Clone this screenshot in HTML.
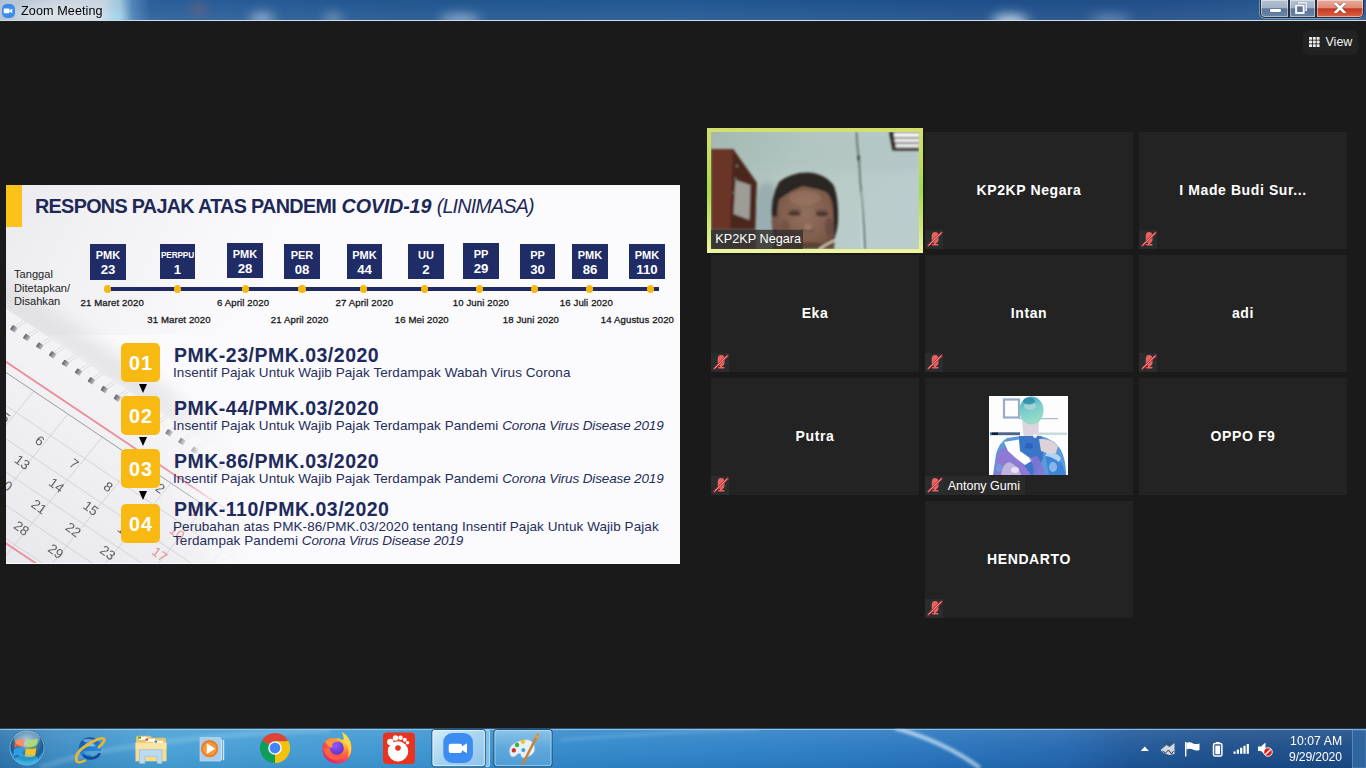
<!DOCTYPE html>
<html><head><meta charset="utf-8">
<style>
*{margin:0;padding:0;box-sizing:border-box}
html,body{width:1366px;height:768px;overflow:hidden;background:#1a1a1a;font-family:"Liberation Sans",sans-serif}
.a{position:absolute}
#titlebar{left:0;top:0;width:1366px;height:21px;background:linear-gradient(90deg,#c9d3df 0px,#d5dde6 60px,#b9cad9 170px,#5f8fbf 240px,#28609f 300px,#1f5591 420px,#22589a 700px,#1e4f8b 1000px,#2b5d97 1180px,#3a6aa0 1366px)}
#titlebar .line{left:0;top:20px;width:1366px;height:1px;background:#c8d8ea}
.title{left:21px;top:3.6px;font-size:12.6px;color:#000;letter-spacing:0.1px}
.wbtn{top:0;height:18px;border:1px solid #24303e;border-top:none;background:linear-gradient(180deg,#b5c3d3 0,#a2b3c6 45%,#5c7799 52%,#6884a6 100%);box-shadow:inset 0 0 0 1px rgba(255,255,255,0.45)}
.wbtn.cls{background:linear-gradient(180deg,#e9aa9a 0,#dc8d78 45%,#c6381f 52%,#d8644a 100%)}
.zicon{left:3px;top:4px;width:12px;height:12px;border-radius:3px;background:#3d8cf0}
.tile{position:absolute;width:208px;height:117px;background:#232323}
.tname{position:absolute;left:0;top:50px;width:208px;text-align:center;color:#fff;font-weight:bold;font-size:14px;letter-spacing:0.6px}
.mute{position:absolute;left:0;top:98px;width:18px;height:19px}
.lbl{position:absolute;font-size:12.5px;color:#fff;white-space:nowrap}
.vbtn{left:1303px;top:30px;width:55px;height:25px;border-radius:6px;background:#222}
.slide{left:6px;top:185px;width:674px;height:379px;background:#fbfbfd;overflow:hidden}
.box{position:absolute;top:59px;width:36px;height:35px;background:#1f2c66;color:#fff;font-weight:bold;text-align:center}
.box .t{font-size:11px;line-height:12px;margin-top:5px}
.box .n{font-size:13.2px;line-height:14px;margin-top:1.5px}
.box.sm .t{font-size:8.3px;letter-spacing:-0.2px;line-height:12px;margin-top:5px}
.dot{position:absolute;top:100.2px;width:7.4px;height:7.4px;border-radius:50%;background:#f7b814}
.dl{position:absolute;font-size:9.6px;letter-spacing:0.12px;color:#1a1a1a;white-space:nowrap;-webkit-text-stroke:0.3px #1a1a1a;margin-top:0.8px}
.num{position:absolute;left:115px;width:39px;height:39px;border-radius:5px;background:#f8ba12;color:#fff;font-weight:bold;font-size:19.8px;letter-spacing:0.8px;text-indent:0.8px;text-align:center;line-height:41px}
.arr{position:absolute;left:133px;width:0;height:0;border-left:4.5px solid transparent;border-right:4.5px solid transparent;border-top:9px solid #000}
.h{position:absolute;left:168px;font-size:19.5px;letter-spacing:0.5px;font-weight:bold;color:#1f2a5c;white-space:nowrap}
.s i{letter-spacing:-0.14px}
.s{position:absolute;left:167px;font-size:13.5px;letter-spacing:0.07px;color:#252d5a;white-space:nowrap}
.task{left:0;top:728px;width:1366px;height:40px;background:linear-gradient(180deg,#5fa6d6 0,#3f8fcb 2px,#3a8ac6 50%,#2f7fbf 100%)}
</style></head><body>
<div id="titlebar" class="a">
  <svg class="a" style="left:0;top:0" width="1366" height="20" viewBox="0 0 1366 20">
  <defs>
  <filter id="tb" x="-50%" y="-50%" width="200%" height="200%"><feGaussianBlur stdDeviation="6"/></filter>
  <linearGradient id="tbg" x1="0" y1="0" x2="1" y2="0">
   <stop offset="0" stop-color="#b4c2d2"/><stop offset="0.04" stop-color="#c6d0dc"/><stop offset="0.075" stop-color="#c8d4e0"/><stop offset="0.088" stop-color="#9cc4dc"/><stop offset="0.097" stop-color="#4f82b8"/><stop offset="0.11" stop-color="#2b5f9a"/><stop offset="0.3" stop-color="#22568f"/><stop offset="0.5" stop-color="#225893"/><stop offset="0.7" stop-color="#1f4f8a"/><stop offset="0.85" stop-color="#204f88"/><stop offset="1" stop-color="#2c5c93"/>
  </linearGradient>
  <linearGradient id="tbv" x1="0" y1="0" x2="0" y2="1"><stop offset="0" stop-color="#fff" stop-opacity="0"/><stop offset="1" stop-color="#fff" stop-opacity="0.07"/></linearGradient>
  </defs>
  <rect width="1366" height="20" fill="url(#tbg)"/>
  <g filter="url(#tb)">
   <ellipse cx="62" cy="15" rx="48" ry="9" fill="#e6ebf0" opacity="0.7"/>
   <ellipse cx="114" cy="17" rx="10" ry="6" fill="#9fe0f4" opacity="0.9"/>
   <ellipse cx="198" cy="9" rx="6" ry="5" fill="#d06040" opacity="0.5"/>
   <ellipse cx="262" cy="19" rx="12" ry="5" fill="#e0f0ff" opacity="0.7"/>
   <ellipse cx="333" cy="19" rx="9" ry="5" fill="#d8e8f8" opacity="0.5"/>
   <ellipse cx="460" cy="20" rx="20" ry="5" fill="#cfe4fa" opacity="0.7"/>
   <ellipse cx="1010" cy="22" rx="18" ry="7" fill="#d8ecff" opacity="0.9"/>
   <ellipse cx="1110" cy="20" rx="20" ry="4" fill="#aac8e8" opacity="0.6"/>
  </g>
  <rect width="1366" height="20" fill="url(#tbv)"/>
  </svg>
  <div class="a" style="left:0;top:20px;width:1366px;height:1px;background:#d0dde9"></div>
  <div class="a" style="left:2px;top:4px;width:13px;height:14px;border-radius:5px;background:#3a8bef"></div>
  <svg class="a" style="left:3px;top:8px" width="10" height="6" viewBox="0 0 10 6"><rect x="0.7" y="0.6" width="5.8" height="4.6" rx="0.8" fill="#fff"/><path d="M6.3 2.6 L9.3 0.6 L9.3 5.2 L6.3 3.2Z" fill="#fff"/></svg>
  <div class="a title">Zoom Meeting</div>
  <!-- window buttons -->
  <div class="a" style="left:1259px;top:-1px;width:105px;height:19.5px;border-radius:0 0 6px 6px;background:rgba(255,255,255,0.35)"></div>
  <div class="a wbtn" style="left:1260px;width:28.5px;border-radius:0 0 0 5px"></div>
  <div class="a wbtn" style="left:1288.5px;width:27px"></div>
  <div class="a wbtn cls" style="left:1315.5px;width:48px;border-radius:0 0 5px 0"></div>
  <div class="a" style="left:1269.5px;top:8.5px;width:11px;height:3.7px;background:#fff;border-radius:1px;box-shadow:0 0 1px #234"></div>
  <svg class="a" style="left:1295px;top:2px" width="12" height="12" viewBox="0 0 12 12"><rect x="3.6" y="0.9" width="7.5" height="7.5" fill="none" stroke="#2a3f58" stroke-width="2.6" opacity="0.55"/><rect x="3.6" y="0.9" width="7.5" height="7.5" fill="none" stroke="#f4f6f8" stroke-width="1.6"/><rect x="1.1" y="3.4" width="7.6" height="7.6" fill="#4f6a8c" stroke="#2a3f58" stroke-width="3" opacity="0.6"/><rect x="1.1" y="3.4" width="7.6" height="7.6" fill="#5a7493" stroke="#f4f6f8" stroke-width="2"/></svg>
  <svg class="a" style="left:1333.5px;top:3px" width="12" height="10" viewBox="0 0 12 10"><path d="M1.5 0.5 L10.5 9.5 M10.5 0.5 L1.5 9.5" stroke="#3a1c1c" stroke-width="4" stroke-linecap="round" opacity="0.5"/><path d="M1.8 0.8 L10.2 9.2 M10.2 0.8 L1.8 9.2" stroke="#fff" stroke-width="2.8" stroke-linecap="square"/></svg>
</div>

<!-- slide -->
<div class="a slide">
<!--CAL--><svg class="a" style="left:0;top:0" width="673" height="378" viewBox="0 0 673 378">
<defs><linearGradient id="fade" gradientUnits="userSpaceOnUse" x1="98.7" y1="-15.8" x2="197.4" y2="-31.6"><stop offset="0" stop-color="#fff" stop-opacity="1"/><stop offset="0.3" stop-color="#fff" stop-opacity="0.8"/><stop offset="0.5" stop-color="#fff" stop-opacity="0.3"/><stop offset="0.75" stop-color="#fff" stop-opacity="0.1"/><stop offset="1" stop-color="#fff" stop-opacity="0"/></linearGradient>
<linearGradient id="rg" x1="0" y1="0" x2="1" y2="0"><stop offset="0" stop-color="#626268"/><stop offset="0.6" stop-color="#98989e"/><stop offset="1" stop-color="#c4c4c8"/></linearGradient>
<linearGradient id="pg" gradientUnits="userSpaceOnUse" x1="0" y1="378" x2="160" y2="150"><stop offset="0" stop-color="#e9e9ed"/><stop offset="0.6" stop-color="#f1f1f4"/><stop offset="1" stop-color="#f7f7f9"/></linearGradient>
<linearGradient id="sh" gradientUnits="userSpaceOnUse" x1="0" y1="0" x2="300" y2="150"><stop offset="0" stop-color="#e9e9ed" stop-opacity="0.9"/><stop offset="0.5" stop-color="#efeff2" stop-opacity="0.5"/><stop offset="1" stop-color="#fbfbfd" stop-opacity="0"/></linearGradient>
<filter id="cb" x="-10%" y="-10%" width="120%" height="120%"><feGaussianBlur stdDeviation="8"/></filter>
<mask id="m"><rect x="0" y="0" width="673" height="378" fill="url(#fade)"/></mask></defs>
<rect x="0" y="0" width="330" height="150" fill="url(#sh)"/>
<g mask="url(#m)">
<polygon points="-30.0,73.7 381.6,349.7 362.3,373.4 -49.2,97.3" fill="#d8d8dc" opacity="0.6" filter="url(#cb)"/>
<polygon points="-45.7,93.0 365.8,369.1 185.6,590.5 -226.0,314.5" fill="url(#pg)"/>
<line x1="-75.2" y1="137.1" x2="-221.9" y2="317.3" stroke="#cdcdd1" stroke-width="0.8"/>
<line x1="-40.9" y1="160.1" x2="-187.6" y2="340.3" stroke="#cdcdd1" stroke-width="0.8"/>
<line x1="-6.6" y1="183.1" x2="-153.3" y2="363.3" stroke="#cdcdd1" stroke-width="0.8"/>
<line x1="27.7" y1="206.1" x2="-119.0" y2="386.3" stroke="#cdcdd1" stroke-width="0.8"/>
<line x1="62.0" y1="229.1" x2="-84.7" y2="409.3" stroke="#cdcdd1" stroke-width="0.8"/>
<line x1="96.3" y1="252.1" x2="-50.4" y2="432.3" stroke="#cdcdd1" stroke-width="0.8"/>
<line x1="130.6" y1="275.1" x2="-16.1" y2="455.3" stroke="#cdcdd1" stroke-width="0.8"/>
<line x1="164.9" y1="298.1" x2="18.2" y2="478.3" stroke="#cdcdd1" stroke-width="0.8"/>
<line x1="199.2" y1="321.1" x2="52.5" y2="501.3" stroke="#cdcdd1" stroke-width="0.8"/>
<line x1="233.5" y1="344.1" x2="86.8" y2="524.3" stroke="#cdcdd1" stroke-width="0.8"/>
<line x1="267.8" y1="367.1" x2="121.1" y2="547.3" stroke="#cdcdd1" stroke-width="0.8"/>
<line x1="302.1" y1="390.1" x2="155.4" y2="570.3" stroke="#cdcdd1" stroke-width="0.8"/>
<line x1="-79.3" y1="134.3" x2="332.2" y2="410.3" stroke="#9a9a9f" stroke-width="1.0"/>
<line x1="-96.8" y1="155.8" x2="314.7" y2="431.8" stroke="#cdcdd1" stroke-width="0.8"/>
<line x1="-114.3" y1="177.3" x2="297.2" y2="453.3" stroke="#cdcdd1" stroke-width="0.8"/>
<line x1="-131.8" y1="198.8" x2="279.7" y2="474.8" stroke="#cdcdd1" stroke-width="0.8"/>
<line x1="-149.3" y1="220.3" x2="262.2" y2="496.3" stroke="#cdcdd1" stroke-width="0.8"/>
<line x1="-166.8" y1="241.8" x2="244.7" y2="517.8" stroke="#cdcdd1" stroke-width="0.8"/>
<line x1="-184.3" y1="263.3" x2="227.2" y2="539.3" stroke="#cdcdd1" stroke-width="0.8"/>
<line x1="-201.8" y1="284.8" x2="209.7" y2="560.8" stroke="#cdcdd1" stroke-width="0.8"/>
<line x1="-73.7" y1="127.5" x2="337.8" y2="403.4" stroke="#ea8c9c" stroke-width="1.8"/>
<line x1="-169.3" y1="244.8" x2="242.3" y2="520.8" stroke="#ea8c9c" stroke-width="1.8"/>
<text x="119.8" y="280.5" transform="rotate(36.8 119.8 280.5)" font-size="13.5" fill="#5e5e62" text-anchor="middle" dominant-baseline="central" font-family="Liberation Sans">1</text>
<text x="154.1" y="303.5" transform="rotate(36.8 154.1 303.5)" font-size="13.5" fill="#5e5e62" text-anchor="middle" dominant-baseline="central" font-family="Liberation Sans">2</text>
<text x="188.4" y="326.5" transform="rotate(36.8 188.4 326.5)" font-size="13.5" fill="#e58a95" text-anchor="middle" dominant-baseline="central" font-family="Liberation Sans">3</text>
<text x="-0.6" y="233.0" transform="rotate(36.8 -0.6 233.0)" font-size="13.5" fill="#5e5e62" text-anchor="middle" dominant-baseline="central" font-family="Liberation Sans">5</text>
<text x="33.7" y="256.0" transform="rotate(36.8 33.7 256.0)" font-size="13.5" fill="#5e5e62" text-anchor="middle" dominant-baseline="central" font-family="Liberation Sans">6</text>
<text x="68.0" y="279.0" transform="rotate(36.8 68.0 279.0)" font-size="13.5" fill="#5e5e62" text-anchor="middle" dominant-baseline="central" font-family="Liberation Sans">7</text>
<text x="102.3" y="302.0" transform="rotate(36.8 102.3 302.0)" font-size="13.5" fill="#5e5e62" text-anchor="middle" dominant-baseline="central" font-family="Liberation Sans">8</text>
<text x="136.6" y="325.0" transform="rotate(36.8 136.6 325.0)" font-size="13.5" fill="#5e5e62" text-anchor="middle" dominant-baseline="central" font-family="Liberation Sans">9</text>
<text x="170.9" y="348.0" transform="rotate(36.8 170.9 348.0)" font-size="13.5" fill="#e58a95" text-anchor="middle" dominant-baseline="central" font-family="Liberation Sans">10</text>
<text x="-18.1" y="254.5" transform="rotate(36.8 -18.1 254.5)" font-size="13.5" fill="#5e5e62" text-anchor="middle" dominant-baseline="central" font-family="Liberation Sans">12</text>
<text x="16.2" y="277.5" transform="rotate(36.8 16.2 277.5)" font-size="13.5" fill="#5e5e62" text-anchor="middle" dominant-baseline="central" font-family="Liberation Sans">13</text>
<text x="50.5" y="300.5" transform="rotate(36.8 50.5 300.5)" font-size="13.5" fill="#5e5e62" text-anchor="middle" dominant-baseline="central" font-family="Liberation Sans">14</text>
<text x="84.8" y="323.5" transform="rotate(36.8 84.8 323.5)" font-size="13.5" fill="#5e5e62" text-anchor="middle" dominant-baseline="central" font-family="Liberation Sans">15</text>
<text x="119.1" y="346.5" transform="rotate(36.8 119.1 346.5)" font-size="13.5" fill="#5e5e62" text-anchor="middle" dominant-baseline="central" font-family="Liberation Sans">16</text>
<text x="153.4" y="369.5" transform="rotate(36.8 153.4 369.5)" font-size="13.5" fill="#e58a95" text-anchor="middle" dominant-baseline="central" font-family="Liberation Sans">17</text>
<text x="-1.3" y="299.0" transform="rotate(36.8 -1.3 299.0)" font-size="13.5" fill="#5e5e62" text-anchor="middle" dominant-baseline="central" font-family="Liberation Sans">20</text>
<text x="33.0" y="322.0" transform="rotate(36.8 33.0 322.0)" font-size="13.5" fill="#5e5e62" text-anchor="middle" dominant-baseline="central" font-family="Liberation Sans">21</text>
<text x="67.3" y="345.0" transform="rotate(36.8 67.3 345.0)" font-size="13.5" fill="#5e5e62" text-anchor="middle" dominant-baseline="central" font-family="Liberation Sans">22</text>
<text x="101.6" y="368.0" transform="rotate(36.8 101.6 368.0)" font-size="13.5" fill="#5e5e62" text-anchor="middle" dominant-baseline="central" font-family="Liberation Sans">23</text>
<text x="135.9" y="391.0" transform="rotate(36.8 135.9 391.0)" font-size="13.5" fill="#e58a95" text-anchor="middle" dominant-baseline="central" font-family="Liberation Sans">24</text>
<text x="-18.8" y="320.5" transform="rotate(36.8 -18.8 320.5)" font-size="13.5" fill="#5e5e62" text-anchor="middle" dominant-baseline="central" font-family="Liberation Sans">27</text>
<text x="15.5" y="343.5" transform="rotate(36.8 15.5 343.5)" font-size="13.5" fill="#5e5e62" text-anchor="middle" dominant-baseline="central" font-family="Liberation Sans">28</text>
<text x="49.8" y="366.5" transform="rotate(36.8 49.8 366.5)" font-size="13.5" fill="#5e5e62" text-anchor="middle" dominant-baseline="central" font-family="Liberation Sans">29</text>
<text x="84.1" y="389.5" transform="rotate(36.8 84.1 389.5)" font-size="13.5" fill="#5e5e62" text-anchor="middle" dominant-baseline="central" font-family="Liberation Sans">30</text>
<g transform="translate(7.9 143.7) rotate(33.8)"><line x1="-0.5" y1="-3" x2="3" y2="-12" stroke="#d6d6da" stroke-width="0.8"/><line x1="2.5" y1="-3" x2="6" y2="-12" stroke="#d6d6da" stroke-width="0.8"/><rect x="-3" y="-2.6" width="6" height="5.4" rx="0.8" fill="url(#rg)"/></g>
<g transform="translate(20.8 152.3) rotate(33.8)"><line x1="-0.5" y1="-3" x2="3" y2="-12" stroke="#d6d6da" stroke-width="0.8"/><line x1="2.5" y1="-3" x2="6" y2="-12" stroke="#d6d6da" stroke-width="0.8"/><rect x="-3" y="-2.6" width="6" height="5.4" rx="0.8" fill="url(#rg)"/></g>
<g transform="translate(33.8 161.0) rotate(33.8)"><line x1="-0.5" y1="-3" x2="3" y2="-12" stroke="#d6d6da" stroke-width="0.8"/><line x1="2.5" y1="-3" x2="6" y2="-12" stroke="#d6d6da" stroke-width="0.8"/><rect x="-3" y="-2.6" width="6" height="5.4" rx="0.8" fill="url(#rg)"/></g>
<g transform="translate(46.7 169.7) rotate(33.8)"><line x1="-0.5" y1="-3" x2="3" y2="-12" stroke="#d6d6da" stroke-width="0.8"/><line x1="2.5" y1="-3" x2="6" y2="-12" stroke="#d6d6da" stroke-width="0.8"/><rect x="-3" y="-2.6" width="6" height="5.4" rx="0.8" fill="url(#rg)"/></g>
<g transform="translate(59.6 178.3) rotate(33.8)"><line x1="-0.5" y1="-3" x2="3" y2="-12" stroke="#d6d6da" stroke-width="0.8"/><line x1="2.5" y1="-3" x2="6" y2="-12" stroke="#d6d6da" stroke-width="0.8"/><rect x="-3" y="-2.6" width="6" height="5.4" rx="0.8" fill="url(#rg)"/></g>
<g transform="translate(72.6 187.0) rotate(33.8)"><line x1="-0.5" y1="-3" x2="3" y2="-12" stroke="#d6d6da" stroke-width="0.8"/><line x1="2.5" y1="-3" x2="6" y2="-12" stroke="#d6d6da" stroke-width="0.8"/><rect x="-3" y="-2.6" width="6" height="5.4" rx="0.8" fill="url(#rg)"/></g>
<g transform="translate(85.5 195.7) rotate(33.8)"><line x1="-0.5" y1="-3" x2="3" y2="-12" stroke="#d6d6da" stroke-width="0.8"/><line x1="2.5" y1="-3" x2="6" y2="-12" stroke="#d6d6da" stroke-width="0.8"/><rect x="-3" y="-2.6" width="6" height="5.4" rx="0.8" fill="url(#rg)"/></g>
<g transform="translate(98.4 204.4) rotate(33.8)"><line x1="-0.5" y1="-3" x2="3" y2="-12" stroke="#d6d6da" stroke-width="0.8"/><line x1="2.5" y1="-3" x2="6" y2="-12" stroke="#d6d6da" stroke-width="0.8"/><rect x="-3" y="-2.6" width="6" height="5.4" rx="0.8" fill="url(#rg)"/></g>
<g transform="translate(111.4 213.0) rotate(33.8)"><line x1="-0.5" y1="-3" x2="3" y2="-12" stroke="#d6d6da" stroke-width="0.8"/><line x1="2.5" y1="-3" x2="6" y2="-12" stroke="#d6d6da" stroke-width="0.8"/><rect x="-3" y="-2.6" width="6" height="5.4" rx="0.8" fill="url(#rg)"/></g>
<g transform="translate(124.3 221.7) rotate(33.8)"><line x1="-0.5" y1="-3" x2="3" y2="-12" stroke="#d6d6da" stroke-width="0.8"/><line x1="2.5" y1="-3" x2="6" y2="-12" stroke="#d6d6da" stroke-width="0.8"/><rect x="-3" y="-2.6" width="6" height="5.4" rx="0.8" fill="url(#rg)"/></g>
<g transform="translate(137.2 230.4) rotate(33.8)"><line x1="-0.5" y1="-3" x2="3" y2="-12" stroke="#d6d6da" stroke-width="0.8"/><line x1="2.5" y1="-3" x2="6" y2="-12" stroke="#d6d6da" stroke-width="0.8"/><rect x="-3" y="-2.6" width="6" height="5.4" rx="0.8" fill="url(#rg)"/></g>
<g transform="translate(150.2 239.0) rotate(33.8)"><line x1="-0.5" y1="-3" x2="3" y2="-12" stroke="#d6d6da" stroke-width="0.8"/><line x1="2.5" y1="-3" x2="6" y2="-12" stroke="#d6d6da" stroke-width="0.8"/><rect x="-3" y="-2.6" width="6" height="5.4" rx="0.8" fill="url(#rg)"/></g>
<g transform="translate(163.1 247.7) rotate(33.8)"><line x1="-0.5" y1="-3" x2="3" y2="-12" stroke="#d6d6da" stroke-width="0.8"/><line x1="2.5" y1="-3" x2="6" y2="-12" stroke="#d6d6da" stroke-width="0.8"/><rect x="-3" y="-2.6" width="6" height="5.4" rx="0.8" fill="url(#rg)"/></g>
<g transform="translate(176.0 256.4) rotate(33.8)"><line x1="-0.5" y1="-3" x2="3" y2="-12" stroke="#d6d6da" stroke-width="0.8"/><line x1="2.5" y1="-3" x2="6" y2="-12" stroke="#d6d6da" stroke-width="0.8"/><rect x="-3" y="-2.6" width="6" height="5.4" rx="0.8" fill="url(#rg)"/></g>
<g transform="translate(188.9 265.1) rotate(33.8)"><line x1="-0.5" y1="-3" x2="3" y2="-12" stroke="#d6d6da" stroke-width="0.8"/><line x1="2.5" y1="-3" x2="6" y2="-12" stroke="#d6d6da" stroke-width="0.8"/><rect x="-3" y="-2.6" width="6" height="5.4" rx="0.8" fill="url(#rg)"/></g>
<g transform="translate(201.9 273.7) rotate(33.8)"><line x1="-0.5" y1="-3" x2="3" y2="-12" stroke="#d6d6da" stroke-width="0.8"/><line x1="2.5" y1="-3" x2="6" y2="-12" stroke="#d6d6da" stroke-width="0.8"/><rect x="-3" y="-2.6" width="6" height="5.4" rx="0.8" fill="url(#rg)"/></g>
<g transform="translate(214.8 282.4) rotate(33.8)"><line x1="-0.5" y1="-3" x2="3" y2="-12" stroke="#d6d6da" stroke-width="0.8"/><line x1="2.5" y1="-3" x2="6" y2="-12" stroke="#d6d6da" stroke-width="0.8"/><rect x="-3" y="-2.6" width="6" height="5.4" rx="0.8" fill="url(#rg)"/></g>
<g transform="translate(227.7 291.1) rotate(33.8)"><line x1="-0.5" y1="-3" x2="3" y2="-12" stroke="#d6d6da" stroke-width="0.8"/><line x1="2.5" y1="-3" x2="6" y2="-12" stroke="#d6d6da" stroke-width="0.8"/><rect x="-3" y="-2.6" width="6" height="5.4" rx="0.8" fill="url(#rg)"/></g>
<g transform="translate(240.7 299.7) rotate(33.8)"><line x1="-0.5" y1="-3" x2="3" y2="-12" stroke="#d6d6da" stroke-width="0.8"/><line x1="2.5" y1="-3" x2="6" y2="-12" stroke="#d6d6da" stroke-width="0.8"/><rect x="-3" y="-2.6" width="6" height="5.4" rx="0.8" fill="url(#rg)"/></g>
<g transform="translate(253.6 308.4) rotate(33.8)"><line x1="-0.5" y1="-3" x2="3" y2="-12" stroke="#d6d6da" stroke-width="0.8"/><line x1="2.5" y1="-3" x2="6" y2="-12" stroke="#d6d6da" stroke-width="0.8"/><rect x="-3" y="-2.6" width="6" height="5.4" rx="0.8" fill="url(#rg)"/></g>
<g transform="translate(266.5 317.1) rotate(33.8)"><line x1="-0.5" y1="-3" x2="3" y2="-12" stroke="#d6d6da" stroke-width="0.8"/><line x1="2.5" y1="-3" x2="6" y2="-12" stroke="#d6d6da" stroke-width="0.8"/><rect x="-3" y="-2.6" width="6" height="5.4" rx="0.8" fill="url(#rg)"/></g>
<g transform="translate(279.5 325.7) rotate(33.8)"><line x1="-0.5" y1="-3" x2="3" y2="-12" stroke="#d6d6da" stroke-width="0.8"/><line x1="2.5" y1="-3" x2="6" y2="-12" stroke="#d6d6da" stroke-width="0.8"/><rect x="-3" y="-2.6" width="6" height="5.4" rx="0.8" fill="url(#rg)"/></g>
<g transform="translate(292.4 334.4) rotate(33.8)"><line x1="-0.5" y1="-3" x2="3" y2="-12" stroke="#d6d6da" stroke-width="0.8"/><line x1="2.5" y1="-3" x2="6" y2="-12" stroke="#d6d6da" stroke-width="0.8"/><rect x="-3" y="-2.6" width="6" height="5.4" rx="0.8" fill="url(#rg)"/></g>
</g></svg><!--/CAL-->
  <div class="a" style="left:0;top:0;width:16px;height:42px;background:#fbc31a"></div>
  <div class="a" style="left:29px;top:9.8px;font-size:19.8px;font-weight:bold;color:#1e2856;white-space:nowrap"><span style="letter-spacing:-0.68px">RESPONS PAJAK ATAS PANDEMI</span> <i style="letter-spacing:-0.2px">COVID-19</i> <i style="font-weight:normal;letter-spacing:-0.85px">(LINIMASA)</i></div>
  <div class="a" style="left:8px;top:83px;font-size:11.1px;line-height:13.6px;color:#222">Tanggal<br>Ditetapkan/<br>Disahkan</div>
  <div class="a" style="left:101.5px;top:102px;width:551px;height:4px;background:#1f2b62"></div>
  <div class="box" style="left:84px;top:59px;width:36px;height:36px"><div class="t">PMK</div><div class="n">23</div></div>
  <div class="box sm" style="left:154px;top:59px;width:35px;height:35px"><div class="t">PERPPU</div><div class="n">1</div></div>
  <div class="box" style="left:221px;top:58px;width:36px;height:35px"><div class="t">PMK</div><div class="n">28</div></div>
  <div class="box" style="left:278px;top:59px;width:36px;height:35px"><div class="t">PER</div><div class="n">08</div></div>
  <div class="box" style="left:341px;top:59px;width:35px;height:35px"><div class="t">PMK</div><div class="n">44</div></div>
  <div class="box" style="left:402px;top:59px;width:36px;height:35px"><div class="t">UU</div><div class="n">2</div></div>
  <div class="box" style="left:457px;top:58px;width:36px;height:36px"><div class="t">PP</div><div class="n">29</div></div>
  <div class="box" style="left:514px;top:59px;width:35px;height:35px"><div class="t">PP</div><div class="n">30</div></div>
  <div class="box" style="left:566px;top:59px;width:36px;height:35px"><div class="t">PMK</div><div class="n">86</div></div>
  <div class="box" style="left:623px;top:59px;width:36px;height:35px"><div class="t">PMK</div><div class="n">110</div></div>
  <div class="dot" style="left:98.0px"></div>
  <div class="dot" style="left:168.0px"></div>
  <div class="dot" style="left:236.1px"></div>
  <div class="dot" style="left:292.4px"></div>
  <div class="dot" style="left:353.5px"></div>
  <div class="dot" style="left:414.5px"></div>
  <div class="dot" style="left:470.1px"></div>
  <div class="dot" style="left:524.7px"></div>
  <div class="dot" style="left:579.5px"></div>
  <div class="dot" style="left:640.5px"></div>
  <div class="dl" id="d1" style="left:74.5px;top:111px">21 Maret 2020</div>
  <div class="dl" id="d2" style="left:211px;top:111px">6 April 2020</div>
  <div class="dl" id="d3" style="left:329.6px;top:111px">27 April 2020</div>
  <div class="dl" id="d4" style="left:446.7px;top:111px">10 Juni 2020</div>
  <div class="dl" id="d5" style="left:553.8px;top:111px">16 Juli 2020</div>
  <div class="dl" id="d6" style="left:141.3px;top:128px">31 Maret 2020</div>
  <div class="dl" id="d7" style="left:264.8px;top:128px">21 April 2020</div>
  <div class="dl" id="d8" style="left:388.7px;top:128px">16 Mei 2020</div>
  <div class="dl" id="d9" style="left:496.7px;top:128px">18 Juni 2020</div>
  <div class="dl" id="d10" style="left:594.8px;top:128px">14 Agustus 2020</div>
  <div class="num" style="top:158px">01</div>
  <div class="num" style="top:210.5px">02</div>
  <div class="num" style="top:264px">03</div>
  <div class="num" style="top:319px">04</div>
  <div class="arr" style="top:199px"></div>
  <div class="arr" style="top:252px"></div>
  <div class="arr" style="top:305.5px"></div>
  <div class="h" id="h1" style="top:159px">PMK-23/PMK.03/2020</div>
  <div class="h" id="h2" style="top:211.5px">PMK-44/PMK.03/2020</div>
  <div class="h" id="h3" style="top:265px">PMK-86/PMK.03/2020</div>
  <div class="h" id="h4" style="top:312.5px">PMK-110/PMK.03/2020</div>
  <div class="s" id="s1" style="top:180px">Insentif Pajak Untuk Wajib Pajak Terdampak Wabah Virus Corona</div>
  <div class="s" id="s2" style="top:233px">Insentif Pajak Untuk Wajib Pajak Terdampak Pandemi <i>Corona Virus Disease 2019</i></div>
  <div class="s" id="s3" style="top:286px">Insentif Pajak Untuk Wajib Pajak Terdampak Pandemi <i>Corona Virus Disease 2019</i></div>
  <div class="s" id="s4" style="top:334.5px;line-height:14.8px">Perubahan atas PMK-86/PMK.03/2020 tentang Insentif Pajak Untuk Wajib Pajak<br>Terdampak Pandemi <i>Corona Virus Disease 2019</i></div>
</div>

<!-- gallery -->
<div class="a" style="left:707px;top:128px;width:216px;height:125px;background:linear-gradient(180deg,#d3df6e 0,#c5df5e 20%,#a3dc45 50%,#c8e86a 75%,#f0f6a0 100%)"></div>
<!--VID--><div class="tile" style="left:711px;top:132px;background:#b0c4c0;overflow:hidden">
<svg width="208" height="117" viewBox="0 0 208 117" style="position:absolute;left:0;top:0">
<defs>
<linearGradient id="wall" x1="0" y1="0" x2="1" y2="0.3"><stop offset="0" stop-color="#a2b6ae"/><stop offset="0.45" stop-color="#b6c9c4"/><stop offset="0.72" stop-color="#b9ccc9"/><stop offset="1" stop-color="#bbcdcb"/></linearGradient>
<radialGradient id="face" cx="0.5" cy="0.45" r="0.65"><stop offset="0" stop-color="#92705f"/><stop offset="0.7" stop-color="#7e5c4c"/><stop offset="1" stop-color="#66483c"/></radialGradient>
<filter id="bl" x="-10%" y="-10%" width="120%" height="120%"><feGaussianBlur stdDeviation="1.2"/></filter>
<filter id="bl2" x="-20%" y="-20%" width="140%" height="140%"><feGaussianBlur stdDeviation="3"/></filter>
</defs>
<rect width="208" height="117" fill="url(#wall)"/>
<rect x="0" y="0" width="208" height="40" fill="#aabebb" opacity="0.35" filter="url(#bl2)"/>
<ellipse cx="56" cy="88" rx="16" ry="38" fill="#8ea4a8" opacity="0.7" filter="url(#bl2)"/>
<g filter="url(#bl)">
<polygon points="0,17 22,17 45.6,50.5 44,101 0,101" fill="#52291f"/>
<polygon points="0,17 22,17 24,30 20,101 0,101" fill="#6a3428"/>
<polygon points="22,17 45.6,50.5 44,101 19,101 21,40" fill="#4c271e"/>
<polygon points="24.5,48 39.5,53 38.5,88 22.5,82" fill="#9e9c96"/>
<circle cx="26" cy="34" r="1.2" fill="#5a8070"/><circle cx="24.5" cy="47" r="1.2" fill="#5a8070"/><circle cx="23" cy="61" r="1.2" fill="#5a8070"/>
<rect x="0" y="97" width="45" height="20" fill="#5a5450"/>
<path d="M145.5 0 Q146 14 148 28 Q149 50 151 70 Q153 95 154 117" stroke="#46524e" stroke-width="1.3" fill="none"/><ellipse cx="147.5" cy="26" rx="1.2" ry="3" fill="#2a3430"/>
<path d="M150 60 L151 117" stroke="#e6eeee" stroke-width="0.8" fill="none" opacity="0.7"/>
<polygon points="178,0 208,0 208,18.5 181.5,18.5" fill="#2a2624"/>
<rect x="183" y="1" width="25" height="4.2" fill="#f6f6f6"/>
<rect x="183.5" y="6.4" width="24.5" height="4" fill="#f2f2f2"/>
<rect x="184.5" y="11.6" width="23.5" height="4" fill="#eeeeee"/>
<path d="M62 117 L63 104 Q61 96 61 88 Q59 66 68 50 Q80 40.5 96 40.5 Q114 41 123 54 Q128 68 127 90 Q126 100 124 104 L123 117Z" fill="#2b2522"/>
<path d="M65 117 L66 90 Q66 74 68 67.5 Q80 58 92 54.3 Q104 56 116 60.3 Q121 66 122 76 Q123 92 123 117Z" fill="url(#face)"/>
<ellipse cx="94" cy="66" rx="16" ry="7" fill="#a27a6a" opacity="0.5"/>
<path d="M62 84 Q59 90 62 97 L67 99 L67 85Z" fill="#7a5648"/>
<ellipse cx="83.5" cy="81.5" rx="6.5" ry="2.4" fill="#3a2822" opacity="0.75"/>
<ellipse cx="111" cy="82" rx="6.5" ry="2.4" fill="#3a2822" opacity="0.75"/>
<ellipse cx="84" cy="78" rx="7" ry="1.3" fill="#5a4038" opacity="0.5"/>
<ellipse cx="110" cy="78.5" rx="7" ry="1.3" fill="#5a4038" opacity="0.5"/>
<ellipse cx="97" cy="95" rx="4" ry="3" fill="#a47c6c" opacity="0.8"/>
<path d="M92 98 Q97 101 102 98" stroke="#4e362e" stroke-width="1.2" fill="none" opacity="0.7"/>
<path d="M84 112 Q97 108 112 112 L112 117 L84 117Z" fill="#4a342c" opacity="0.6"/>
<ellipse cx="74" cy="96" rx="5" ry="8" fill="#6a4a40" opacity="0.5"/>
<ellipse cx="118" cy="95" rx="4" ry="9" fill="#5a4038" opacity="0.5"/>
<path d="M108 117 Q116 112 124 108" stroke="#e8e0c8" stroke-width="1.5" fill="none"/>
</g>
<rect x="0" y="97.8" width="92" height="19.2" fill="#322e2c" opacity="0.8"/>
<div></div>
</svg>
<div class="a lbl" style="left:4.3px;top:100.4px;font-size:12.7px">KP2KP Negara</div>
</div><!--/VID-->
<div class="tile" style="left:925px;top:132px"><div class="tname">KP2KP Negara</div><svg class="mute" width="18" height="19" viewBox="0 0 18 19"><rect width="18" height="19" fill="#2a2d2d"/><rect x="6.7" y="2" width="6.8" height="11.2" rx="3.4" ry="4" fill="#e8625e"/><rect x="9" y="12.5" width="2.2" height="2" fill="#e8625e"/><rect x="7" y="14" width="6.6" height="1.4" rx="0.6" fill="#e8625e"/><line x1="3.3" y1="15.6" x2="16.6" y2="2.6" stroke="#b8323a" stroke-width="2.2" stroke-linecap="round"/><line x1="3.5" y1="15.4" x2="16.4" y2="2.8" stroke="#f7c0c0" stroke-width="0.8"/></svg></div>
<div class="tile" style="left:1139px;top:132px"><div class="tname">I Made Budi Sur...</div><svg class="mute" width="18" height="19" viewBox="0 0 18 19"><rect width="18" height="19" fill="#2a2d2d"/><rect x="6.7" y="2" width="6.8" height="11.2" rx="3.4" ry="4" fill="#e8625e"/><rect x="9" y="12.5" width="2.2" height="2" fill="#e8625e"/><rect x="7" y="14" width="6.6" height="1.4" rx="0.6" fill="#e8625e"/><line x1="3.3" y1="15.6" x2="16.6" y2="2.6" stroke="#b8323a" stroke-width="2.2" stroke-linecap="round"/><line x1="3.5" y1="15.4" x2="16.4" y2="2.8" stroke="#f7c0c0" stroke-width="0.8"/></svg></div>
<div class="tile" style="left:711px;top:255px"><div class="tname">Eka</div><svg class="mute" width="18" height="19" viewBox="0 0 18 19"><rect width="18" height="19" fill="#2a2d2d"/><rect x="6.7" y="2" width="6.8" height="11.2" rx="3.4" ry="4" fill="#e8625e"/><rect x="9" y="12.5" width="2.2" height="2" fill="#e8625e"/><rect x="7" y="14" width="6.6" height="1.4" rx="0.6" fill="#e8625e"/><line x1="3.3" y1="15.6" x2="16.6" y2="2.6" stroke="#b8323a" stroke-width="2.2" stroke-linecap="round"/><line x1="3.5" y1="15.4" x2="16.4" y2="2.8" stroke="#f7c0c0" stroke-width="0.8"/></svg></div>
<div class="tile" style="left:925px;top:255px"><div class="tname">Intan</div><svg class="mute" width="18" height="19" viewBox="0 0 18 19"><rect width="18" height="19" fill="#2a2d2d"/><rect x="6.7" y="2" width="6.8" height="11.2" rx="3.4" ry="4" fill="#e8625e"/><rect x="9" y="12.5" width="2.2" height="2" fill="#e8625e"/><rect x="7" y="14" width="6.6" height="1.4" rx="0.6" fill="#e8625e"/><line x1="3.3" y1="15.6" x2="16.6" y2="2.6" stroke="#b8323a" stroke-width="2.2" stroke-linecap="round"/><line x1="3.5" y1="15.4" x2="16.4" y2="2.8" stroke="#f7c0c0" stroke-width="0.8"/></svg></div>
<div class="tile" style="left:1139px;top:255px"><div class="tname">adi</div><svg class="mute" width="18" height="19" viewBox="0 0 18 19"><rect width="18" height="19" fill="#2a2d2d"/><rect x="6.7" y="2" width="6.8" height="11.2" rx="3.4" ry="4" fill="#e8625e"/><rect x="9" y="12.5" width="2.2" height="2" fill="#e8625e"/><rect x="7" y="14" width="6.6" height="1.4" rx="0.6" fill="#e8625e"/><line x1="3.3" y1="15.6" x2="16.6" y2="2.6" stroke="#b8323a" stroke-width="2.2" stroke-linecap="round"/><line x1="3.5" y1="15.4" x2="16.4" y2="2.8" stroke="#f7c0c0" stroke-width="0.8"/></svg></div>
<div class="tile" style="left:711px;top:378px"><div class="tname">Putra</div><svg class="mute" width="18" height="19" viewBox="0 0 18 19"><rect width="18" height="19" fill="#2a2d2d"/><rect x="6.7" y="2" width="6.8" height="11.2" rx="3.4" ry="4" fill="#e8625e"/><rect x="9" y="12.5" width="2.2" height="2" fill="#e8625e"/><rect x="7" y="14" width="6.6" height="1.4" rx="0.6" fill="#e8625e"/><line x1="3.3" y1="15.6" x2="16.6" y2="2.6" stroke="#b8323a" stroke-width="2.2" stroke-linecap="round"/><line x1="3.5" y1="15.4" x2="16.4" y2="2.8" stroke="#f7c0c0" stroke-width="0.8"/></svg></div>
<div class="tile" style="left:1139px;top:378px"><div class="tname">OPPO F9</div></div>
<div class="tile" style="left:925px;top:501px"><div class="tname">HENDARTO</div><svg class="mute" width="18" height="19" viewBox="0 0 18 19"><rect width="18" height="19" fill="#2a2d2d"/><rect x="6.7" y="2" width="6.8" height="11.2" rx="3.4" ry="4" fill="#e8625e"/><rect x="9" y="12.5" width="2.2" height="2" fill="#e8625e"/><rect x="7" y="14" width="6.6" height="1.4" rx="0.6" fill="#e8625e"/><line x1="3.3" y1="15.6" x2="16.6" y2="2.6" stroke="#b8323a" stroke-width="2.2" stroke-linecap="round"/><line x1="3.5" y1="15.4" x2="16.4" y2="2.8" stroke="#f7c0c0" stroke-width="0.8"/></svg></div>
<div class="tile" style="left:925px;top:378px"><!--AVA--><svg class="a" style="left:64.4px;top:18.4px" width="79" height="79" viewBox="0 0 79 79">
<defs><filter id="ab" x="-20%" y="-20%" width="140%" height="140%"><feGaussianBlur stdDeviation="0.7"/></filter>
<linearGradient id="hd" x1="0" y1="0" x2="0.3" y2="1"><stop offset="0" stop-color="#3aa6bc"/><stop offset="0.5" stop-color="#78cccc"/><stop offset="1" stop-color="#98dcc8"/></linearGradient>
</defs>
<rect width="79" height="79" fill="#fdfdfd"/>
<g filter="url(#ab)">
<rect x="15" y="3.5" width="15" height="18" fill="none" stroke="#8098bc" stroke-width="2.2" opacity="0.8"/>
<line x1="30" y1="22.6" x2="69" y2="22.6" stroke="#a8bccc" stroke-width="1.1"/>
<path d="M33 24 Q34 40 36 42 L50 42 Q49 32 50 24Z" fill="#dcd4de"/>
<ellipse cx="42.5" cy="14.5" rx="12" ry="14" fill="url(#hd)"/>
<ellipse cx="41" cy="10" rx="6" ry="4" fill="#c0dcdc" opacity="0.6"/>
<ellipse cx="40" cy="5" rx="6" ry="3.5" fill="#2a8aa8" opacity="0.8"/>
<rect x="1" y="36.3" width="30" height="2.9" fill="#3a5480" opacity="0.9"/>
<rect x="3" y="36.6" width="6" height="2.2" fill="#101828"/>
<rect x="50" y="36.5" width="28" height="2.5" fill="#b0cccc" opacity="0.7"/>
<path d="M4 79 L7 58 Q10 47 18 42 L32 40 L52 40 Q66 44 72 54 Q77 64 77 79Z" fill="#5a9ad8"/>
<path d="M30 40 L52 40 Q56 50 54 62 Q50 72 46 79 L30 79Z" fill="#3a74c8"/>
<path d="M5 79 L8 60 Q12 50 19 52 Q26 60 33 66 L42 79Z" fill="#8c7ad4"/>
<path d="M12 79 Q13 68 20 66 Q29 69 32 79Z" fill="#c0b4e0"/>
<path d="M15 46 L30 43.5 L31 55 Q38 60 44 64 L36 69 Q26 62 19 55Z" fill="#fff"/>
<path d="M50 43 Q62 42 69 50 L67 57 Q58 58 52 55Z" fill="#dcd2d8"/>
<path d="M56 58 Q66 60 73 68 L77 79 L60 79Z" fill="#3c84d8"/>
<path d="M58 56 Q68 56 72 62 L70 66 Q62 60 56 60Z" fill="#c8e4f8" opacity="0.8"/>
<path d="M40 62 Q46 70 44 79 L56 79 Q54 68 48 60Z" fill="#8874d4" opacity="0.8"/>
<path d="M2 48 Q4 58 5 66 L1 70 L0 46Z" fill="#fff"/>
<path d="M72 50 Q77 56 78 62 L79 48Z" fill="#fff"/>
<ellipse cx="26" cy="74" rx="4" ry="3" fill="#e8e2f4"/>
<ellipse cx="64" cy="71" rx="4" ry="5" fill="#9cc0ec" opacity="0.8"/>
<ellipse cx="40" cy="50" rx="4" ry="3" fill="#2a5cb8" opacity="0.7"/>
<circle cx="46" cy="40" r="2" fill="#e8f2ff"/>
<ellipse cx="10" cy="72" rx="3" ry="4" fill="#6aa4e0" opacity="0.8"/>
</g>
</svg><!--/AVA--><div class="a" style="left:0;top:97.6px;width:100px;height:19.4px;background:#2a2a2a"></div><svg class="mute" width="18" height="19" viewBox="0 0 18 19"><rect width="18" height="19" fill="#2a2d2d"/><rect x="6.7" y="2" width="6.8" height="11.2" rx="3.4" ry="4" fill="#e8625e"/><rect x="9" y="12.5" width="2.2" height="2" fill="#e8625e"/><rect x="7" y="14" width="6.6" height="1.4" rx="0.6" fill="#e8625e"/><line x1="3.3" y1="15.6" x2="16.6" y2="2.6" stroke="#b8323a" stroke-width="2.2" stroke-linecap="round"/><line x1="3.5" y1="15.4" x2="16.4" y2="2.8" stroke="#f7c0c0" stroke-width="0.8"/></svg><div class="a lbl" style="left:22.7px;top:100.5px">Antony Gumi</div></div>
<div class="a vbtn"><div class="a" style="left:6px;top:7px;width:11px;height:10px"><svg width="11" height="10" viewBox="0 0 11 10" style="display:block"><g fill="#eee"><rect x="0" y="0" width="3" height="2.8" rx=".6"/><rect x="3.8" y="0" width="3" height="2.8" rx=".6"/><rect x="7.6" y="0" width="3" height="2.8" rx=".6"/><rect x="0" y="3.6" width="3" height="2.8" rx=".6"/><rect x="3.8" y="3.6" width="3" height="2.8" rx=".6"/><rect x="7.6" y="3.6" width="3" height="2.8" rx=".6"/><rect x="0" y="7.2" width="3" height="2.8" rx=".6"/><rect x="3.8" y="7.2" width="3" height="2.8" rx=".6"/><rect x="7.6" y="7.2" width="3" height="2.8" rx=".6"/></g></svg></div><div class="a" style="left:22.5px;top:4.6px;font-size:12.5px;color:#f2f2f2">View</div></div>

<!--TASK--><div class="a" style="left:0;top:728px;width:1366px;height:40px;overflow:hidden">
<svg width="1366" height="40" viewBox="0 0 1366 40" style="position:absolute;left:0;top:0">
<defs>
<linearGradient id="tkg" x1="0" y1="0" x2="1" y2="0"><stop offset="0" stop-color="#2d74ad"/><stop offset="0.04" stop-color="#3a8bc4"/><stop offset="0.12" stop-color="#46a0d6"/><stop offset="0.3" stop-color="#3b95d2"/><stop offset="0.42" stop-color="#3088cb"/><stop offset="0.55" stop-color="#2b80c6"/><stop offset="0.68" stop-color="#2674bd"/><stop offset="0.78" stop-color="#2266b0"/><stop offset="0.83" stop-color="#1d5698"/><stop offset="0.9" stop-color="#1b4d8a"/><stop offset="1" stop-color="#1a4a86"/></linearGradient>
<linearGradient id="tkv" x1="0" y1="0" x2="0" y2="1"><stop offset="0" stop-color="#fff" stop-opacity="0.12"/><stop offset="0.5" stop-color="#fff" stop-opacity="0.04"/><stop offset="1" stop-color="#000" stop-opacity="0.05"/></linearGradient>
<filter id="tkb"><feGaussianBlur stdDeviation="1.5"/></filter>
<radialGradient id="orb" cx="0.5" cy="0.35" r="0.6"><stop offset="0" stop-color="#9fc8e0"/><stop offset="0.45" stop-color="#3e7fae"/><stop offset="0.8" stop-color="#1b5a8e"/><stop offset="1" stop-color="#33a8e0"/></radialGradient>
<linearGradient id="zbtn" x1="0" y1="0" x2="1" y2="1"><stop offset="0" stop-color="#d8eefa"/><stop offset="0.5" stop-color="#a6d4f0"/><stop offset="1" stop-color="#8cc4ea"/></linearGradient>
<linearGradient id="pbtn" x1="0" y1="0" x2="0" y2="1"><stop offset="0" stop-color="#8cc4e8"/><stop offset="0.5" stop-color="#5ea8dc"/><stop offset="1" stop-color="#4f9dd6"/></linearGradient>
</defs>
<rect width="1366" height="40" fill="url(#tkg)"/>
<g filter="url(#tkb)" opacity="0.5">
<path d="M40 40 Q120 10 330 2" stroke="#bfe4f8" stroke-width="6" fill="none" opacity="0.4"/>
<path d="M560 12 Q700 2 760 1" stroke="#bfe4f8" stroke-width="4" fill="none" opacity="0.3"/>
</g>
<path d="M895 0 Q945 14 980 40" stroke="#cfe8fa" stroke-width="4" fill="none" opacity="0.75" filter="url(#tkb)"/>
<rect width="1366" height="40" fill="url(#tkv)"/>
<rect x="0" y="0" width="1366" height="1" fill="#0d2436" opacity="0.6"/>
<rect x="0" y="1" width="1366" height="1" fill="#a8cde6" opacity="0.8"/>
<!-- start orb -->
<circle cx="27" cy="20" r="18" fill="#1c4f7c" opacity="0.6"/>
<circle cx="27" cy="20" r="17.2" fill="url(#orb)" stroke="#8cc0e0" stroke-width="0.8"/>
<g transform="translate(26.5 19.5) scale(1.12) skewY(-4)">
<path d="M-10 -7 Q-6 -9 -1.5 -7.5 L-2.5 -0.8 Q-7 -2.4 -11 -0.6Z" fill="#f0602a"/>
<path d="M0.5 -7.3 Q5 -5.6 10 -7.6 L9 -0.6 Q4.5 1.2 -0.4 -0.5Z" fill="#8dc840"/>
<path d="M-11.2 0.8 Q-7 -1 -2.8 0.6 L-3.8 7.2 Q-8 5.6 -12 7.3Z" fill="#2f9ee8"/>
<path d="M-0.6 0.8 Q4.2 2.6 8.8 0.8 L7.8 7.8 Q3 9.6 -1.6 7.6Z" fill="#f8c21c"/>
</g>
<ellipse cx="27" cy="11" rx="13" ry="8" fill="#fff" opacity="0.3"/><ellipse cx="27" cy="31" rx="11" ry="5" fill="#40d0ff" opacity="0.45"/>
<!-- IE -->
<defs>
<mask id="iem"><rect x="-20" y="-20" width="40" height="40" fill="#000"/><circle cx="0" cy="0" r="11.2" fill="#fff"/><path d="M-6.2 -1.2 Q-5.6 -6.8 0 -6.8 Q5.6 -6.8 6.2 -1.2Z" fill="#000"/><path d="M-6.2 2.4 H12 V12 H3 Q1.5 6.6 0 6.4 Q-5 6.4 -6.2 2.4Z" fill="#000"/></mask>
<linearGradient id="ieg" x1="0" y1="0" x2="0.4" y2="1"><stop offset="0" stop-color="#0a3f8c"/><stop offset="0.45" stop-color="#1a6cc4"/><stop offset="0.75" stop-color="#2a8ae0"/><stop offset="1" stop-color="#1660b8"/></linearGradient>
</defs>
<g transform="translate(90 20.5)">
<rect x="-12" y="-12" width="24" height="24" fill="url(#ieg)" mask="url(#iem)"/>
<path d="M-6 6 Q-2 9.5 4 8 Q7 7 8.5 4.5 L11 4.5 Q9 10.5 2 11 Q-5 11.5 -8 6Z" fill="#0e4c9c"/><path d="M-4.5 -2.5 Q-3.5 -5.5 0 -5.5 Q3.5 -5.5 4.5 -2.5Z" fill="#8fd0f4" opacity="0.8"/><ellipse cx="-2" cy="-8" rx="5" ry="1.8" fill="#bfe8ff" opacity="0.5"/>
<path d="M-13 13 Q-17 5 -2 -4 Q11 -12 14 -9.5 Q15.5 -7 9 -1.5" stroke="#e8b830" stroke-width="2.8" fill="none" stroke-linecap="round"/>
<path d="M-13 13 Q-11 15 -5 12" stroke="#e8b830" stroke-width="2.4" fill="none" stroke-linecap="round"/>
</g>
<!-- folder -->
<g transform="translate(135 6.8)">
<path d="M1 3 Q1 1 3 1 H15 L17 3 H29 Q31 3 31 5 V26 H1Z" fill="#e9c66b"/>
<rect x="4" y="2" width="8" height="3" fill="#fff"/><rect x="3.5" y="1.8" width="2.5" height="2" fill="#28a745"/>
<rect x="11" y="4" width="9" height="3" fill="#fff"/><rect x="10.5" y="3.8" width="2.5" height="2" fill="#c8402a"/>
<rect x="18" y="6" width="10" height="3" fill="#fff"/><rect x="19.5" y="6" width="2.5" height="2" fill="#2f7bd0"/>
<path d="M0.5 8 H31.5 V26.5 H0.5Z" fill="#f8dc8e"/>
<path d="M0.5 8 H31.5 V14 H0.5Z" fill="#fbe9b0" opacity="0.6"/>
<path d="M4.5 15 H27 V28.6 H22 V21.5 H10 V28.6 H4.5Z" fill="#b9dcf2" stroke="#8ab8da" stroke-width="0.6"/>
</g>
<!-- media player -->
<g transform="translate(200 9.7)">
<rect x="21" y="1.5" width="1.2" height="21" fill="#cfe6f7"/><rect x="23" y="2.5" width="1.2" height="20" fill="#cfe6f7"/>
<rect x="0" y="0" width="20.5" height="23.3" fill="#a9cdea" stroke="#c8e2f4" stroke-width="0.6"/>
<circle cx="9.6" cy="11" r="8.6" fill="#f07a20"/>
<circle cx="9.6" cy="11" r="6.8" fill="#f59a3a"/>
<path d="M6.8 5.6 L15.2 11 L6.8 16.4Z" fill="#fff"/>
</g>
<!-- chrome -->
<g transform="translate(275 20)">
<path d="M0 0 L-13 -7.5 A15 15 0 0 1 13 -7.5Z" fill="#db4437"/>
<path d="M0 0 L13 -7.5 A15 15 0 0 1 0 15Z" fill="#f4c20d"/>
<path d="M0 0 L0 15 A15 15 0 0 1 -13 -7.5Z" fill="#0f9d58"/>
<path d="M0 -6.8 H13 A15 15 0 0 1 0 15 L6.4 3.6Z" fill="#f4c20d"/>
<path d="M-5.9 3.4 L-13 -7.5 A15 15 0 0 1 0 -15 L13 -7.5 H0Z" fill="#db4437" opacity="0"/>
<circle r="6.8" fill="#fff"/>
<circle r="5.4" fill="#4285f4"/>
</g>
<!-- firefox -->
<defs><radialGradient id="ffg" cx="0.75" cy="0.15" r="1"><stop offset="0" stop-color="#fff44f"/><stop offset="0.25" stop-color="#ffbd2e"/><stop offset="0.5" stop-color="#ff7139"/><stop offset="0.78" stop-color="#f23e5a"/><stop offset="1" stop-color="#d9167a"/></radialGradient>
<radialGradient id="ffp" cx="0.4" cy="0.3" r="0.8"><stop offset="0" stop-color="#9059ff"/><stop offset="1" stop-color="#5b2bd0"/></radialGradient></defs>
<g transform="translate(337 20.5)">
<path d="M-14.5 1 A14.5 14 0 0 0 14.5 1 Q15 -6 11 -11 Q9 -14 5 -16.5 Q8 -11 6 -8 Q2 -11 -3 -10 Q-8 -12 -11 -8 Q-15 -4 -14.5 1Z" fill="url(#ffg)"/>
<path d="M5 -16.5 Q13 -11 14 -3 Q15 5 11 9 Q13 0 8 -6 Q7 -11 5 -16.5Z" fill="#ffd84a" opacity="0.9"/>
<circle cx="0" cy="-0.5" r="6.8" fill="url(#ffp)"/>
<path d="M-12 -7 Q-8 -11 -2 -9.5 Q3 -9 6 -6 Q1 -8 -3 -6 Q-6 -4 -4 -1 Q-9 -1 -12 -7Z" fill="#ff9640"/>
<path d="M-14 -1 Q-11 1 -7 -1 Q-8 5 -3 8 Q3 10 8 6 Q3 12 -4 11 Q-12 9 -14 -1Z" fill="#ff6a3a" opacity="0.85"/>
</g>
<!-- GOM -->
<g transform="translate(383 4.4)">
<rect x="0" y="0" width="32" height="31.7" rx="4" fill="#e8341f"/>
<circle cx="15" cy="19" r="10.2" fill="#fff"/>
<circle cx="15" cy="15.6" r="2.8" fill="#e8341f"/>
<circle cx="7.4" cy="9.5" r="3.2" fill="#fff"/>
<circle cx="12.5" cy="5.6" r="2.7" fill="#fff"/>
<circle cx="17.5" cy="5.4" r="2.3" fill="#fff"/>
<circle cx="21.8" cy="7.4" r="2" fill="#fff"/>
<circle cx="24.6" cy="10.4" r="1.7" fill="#fff"/>
</g>
<!-- zoom button -->
<rect x="485.5" y="2" width="4" height="36.7" rx="1.5" fill="#7ec0ea" stroke="#cbe8fa" stroke-width="0.8"/>
<rect x="432" y="1.5" width="53.3" height="37.2" rx="2.5" fill="url(#zbtn)" stroke="#0d3552" stroke-width="0.8"/>
<rect x="433" y="2.5" width="51.3" height="35.2" rx="2" fill="none" stroke="#e8f6ff" stroke-width="1" opacity="0.8"/>
<rect x="443.3" y="5" width="29.6" height="30" rx="9" fill="#3d8cf2"/>
<rect x="448.7" y="15.8" width="13.3" height="9.2" rx="2" fill="#fff"/>
<path d="M461 19 L467 15.3 V25.3 L461 21.6Z" fill="#fff"/>
<!-- paint button -->
<rect x="494" y="1.5" width="58" height="37.2" rx="2.5" fill="url(#pbtn)" stroke="#0d3552" stroke-width="0.8"/>
<rect x="495" y="2.5" width="56" height="35.2" rx="2" fill="none" stroke="#bfe2f8" stroke-width="1" opacity="0.7"/>
<g transform="translate(522 21.5) rotate(-20)">
<path d="M-13 2 Q-14 -9 0 -9 Q13 -9 13 0 Q13 9 2 9 Q-4 9 -3 5 Q-2 2 -6 3 Q-11 6 -13 2Z" fill="#e6f2fa" stroke="#8fb4cc" stroke-width="0.6"/>
<circle cx="-8" cy="-2" r="2.2" fill="#d8332a"/>
<circle cx="-3" cy="-6" r="2.2" fill="#3fb040"/>
<circle cx="3.5" cy="-7" r="2.2" fill="#f0c020"/>
<circle cx="1" cy="1" r="2" fill="#4f9dd6"/>
</g>
<path d="M537.6 6.9 L523 35.5" stroke="#c8843a" stroke-width="2.6" stroke-linecap="round"/>
<path d="M535 6 L540 8 L538.5 11 L534 9Z" fill="#d4a060"/>
<!-- tray -->
<path d="M1140.7 23.1 L1144.8 18.6 L1148.8 23.1Z" fill="#fff"/>
<g transform="translate(1160.5 14)" fill="#e8eef4">
<path d="M0 8 L6 3 L9 5 L14 1 L14 12 L9 13 L3 11Z" fill="#d0d8e0"/>
<path d="M2 9 L5 11 L8 8 L11 12 L13 9" stroke="#333" stroke-width="1" fill="none"/>
<path d="M4 0 L9 3 M6 -1 L11 2" stroke="#444" stroke-width="0.8"/>
</g>
<g transform="translate(1185 14)">
<rect x="0" y="0" width="1.4" height="14.5" fill="#fff"/>
<path d="M1.4 0.8 Q5 -0.4 8 1.4 Q11 2.6 14.5 1.4 L14.5 8 Q11 9.2 8 7.6 Q5 6 1.4 7.4Z" fill="#fff"/>
</g>
<g transform="translate(1212.7 14)">
<rect x="3.2" y="0" width="3.6" height="1.6" fill="#fff"/>
<rect x="0.8" y="1.6" width="8.4" height="12.4" rx="1.6" fill="none" stroke="#fff" stroke-width="1.5"/>
<rect x="2.6" y="3.6" width="4.8" height="8.6" fill="#fff"/>
</g>
<g transform="translate(1233.5 16)" fill="#fff">
<rect x="0" y="7.5" width="2.2" height="2.3"/><rect x="3.3" y="5.6" width="2.2" height="4.2"/><rect x="6.6" y="3.7" width="2.2" height="6.1"/><rect x="9.9" y="1.8" width="2.2" height="8"/><rect x="13.2" y="0" width="2.2" height="9.8"/>
</g>
<g transform="translate(1258 14)">
<path d="M0 4.5 H3 L7.5 0.5 V13 L3 9 H0Z" fill="#fff"/>
<circle cx="10" cy="10" r="4.3" fill="#d8201c" stroke="#fff" stroke-width="0.9"/>
<path d="M7.4 12.4 L12.6 7.6" stroke="#fff" stroke-width="1.4"/>
</g>
<rect x="1352.5" y="2" width="13.5" height="38" fill="#2a5e98" stroke="#6f9ccb" stroke-width="0.8" opacity="0.9"/>
<rect x="1353.5" y="3" width="12" height="36" fill="#3b72aa" opacity="0.4"/>
</svg>
<div class="a" style="left:1290px;top:5.5px;font-size:12.2px;color:#fff;white-space:nowrap;letter-spacing:0.1px">10:07 AM</div>
<div class="a" style="left:1289px;top:22px;font-size:12.2px;color:#fff;white-space:nowrap;letter-spacing:-0.15px">9/29/2020</div>
</div><!--/TASK-->
</body></html>
